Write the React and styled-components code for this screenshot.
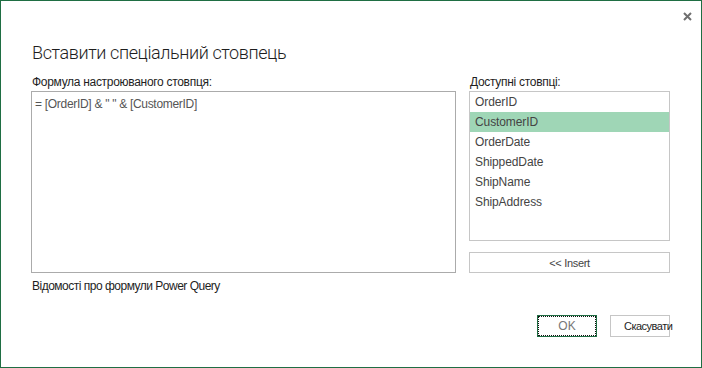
import React from "react";
import styled, { createGlobalStyle } from "styled-components";

const Global = createGlobalStyle`
  html, body {
    margin: 0;
    padding: 0;
    background: #ffffff;
  }
  body {
    font-family: "Liberation Sans", Arial, sans-serif;
  }
`;

const Dialog = styled.div`
  width: 702px;
  height: 368px;
  box-sizing: border-box;
  border: 1px solid #1f6e43;
  background: #ffffff;
  display: flex;
  flex-direction: column;
`;

const TopBar = styled.div`
  height: 30px;
  display: flex;
  justify-content: flex-end;
  align-items: flex-start;
  padding: 10px 9px 0 0;
  box-sizing: border-box;
`;

const CloseButton = styled.button`
  width: 10px;
  height: 10px;
  padding: 0;
  border: none;
  background: transparent;
  display: flex;
  align-items: center;
  justify-content: center;
  cursor: pointer;
`;

const Content = styled.div`
  padding: 0 31px 0 30px;
  display: flex;
  flex-direction: column;
`;

const Title = styled.h1`
  margin: 10px 0 0 1px;
  height: 24px;
  line-height: 24px;
  font-family: Roboto, "Liberation Sans", sans-serif;
  font-weight: 300;
  font-size: 18px;
  letter-spacing: -0.4px;
  color: #1e1e1e;
`;

const Body = styled.div`
  margin-top: 9px;
  display: grid;
  grid-template-columns: 425px 201px;
  column-gap: 13px;
`;

const Column = styled.div`
  display: flex;
  flex-direction: column;
`;

const Label = styled.div`
  height: 17px;
  line-height: 16px;
  font-size: 12px;
  letter-spacing: -0.3px;
  color: #1e1e1e;
  padding-left: 1px;
`;

const FormulaBox = styled.div`
  height: 182px;
  box-sizing: border-box;
  border: 1px solid #ababab;
  padding: 4px 3px;
  font-size: 12px;
  letter-spacing: -0.3px;
  line-height: 16px;
  color: #555555;
`;

const HelpLink = styled.a`
  margin-top: 5px;
  padding-left: 1px;
  line-height: 16px;
  font-size: 12px;
  letter-spacing: -0.5px;
  color: #1e1e1e;
  text-decoration: none;
  cursor: pointer;
`;

const ListBox = styled.ul`
  margin: 0;
  padding: 0;
  list-style: none;
  height: 150px;
  box-sizing: border-box;
  border: 1px solid #c6c6c6;
`;

const ListItem = styled.li`
  height: 20px;
  line-height: 21px;
  padding-left: 5px;
  font-size: 12px;
  letter-spacing: -0.1px;
  color: #444444;
  background: ${(p) => (p.$selected ? "#9fd6b6" : "transparent")};
`;

const InsertButton = styled.button`
  margin-top: 11px;
  height: 21px;
  border: 1px solid #c6c6c6;
  background: #ffffff;
  font-family: "Liberation Sans", Arial, sans-serif;
  font-size: 11px;
  letter-spacing: -0.3px;
  color: #444444;
  padding: 0;
`;

const Footer = styled.div`
  margin-top: 21px;
  display: flex;
  justify-content: flex-end;
  gap: 13px;
`;

const DialogButton = styled.button`
  width: 60px;
  height: 22px;
  box-sizing: border-box;
  background: #ffffff;
  border: 1px solid ${(p) => (p.$primary ? "#1f6e43" : "#c6c6c6")};
  outline: ${(p) => (p.$primary ? "1px dotted #111" : "none")};
  outline-offset: -2px;
  font-family: "Liberation Sans", Arial, sans-serif;
  font-size: ${(p) => (p.$primary ? "12px" : "11px")};
  letter-spacing: ${(p) => (p.$primary ? "0" : "-0.5px")};
  color: ${(p) => (p.$primary ? "#777777" : "#1e1e1e")};
  padding: 0 0 0 ${(p) => (p.$primary ? "0" : "13px")};
  text-align: ${(p) => (p.$primary ? "center" : "left")};
  white-space: nowrap;
  overflow: visible;
`;

const columns = ["OrderID", "CustomerID", "OrderDate", "ShippedDate", "ShipName", "ShipAddress"];

export default function App() {
  return (
    <>
      <Global />
      <Dialog>
        <TopBar>
          <CloseButton aria-label="Close">
            <svg width="9" height="9" viewBox="0 0 9 9">
              <path d="M1 1 L8 8 M8 1 L1 8" stroke="#6f6f6f" strokeWidth="2" />
            </svg>
          </CloseButton>
        </TopBar>
        <Content>
          <Title>Вставити спеціальний стовпець</Title>
          <Body>
            <Column>
              <Label>Формула настроюваного стовпця:</Label>
              <FormulaBox>= [OrderID] &amp; " " &amp; [CustomerID]</FormulaBox>
              <HelpLink>Відомості про формули Power Query</HelpLink>
            </Column>
            <Column>
              <Label>Доступні стовпці:</Label>
              <ListBox>
                {columns.map((c) => (
                  <ListItem key={c} $selected={c === "CustomerID"}>
                    {c}
                  </ListItem>
                ))}
              </ListBox>
              <InsertButton>&lt;&lt; Insert</InsertButton>
            </Column>
          </Body>
          <Footer>
            <DialogButton $primary>OK</DialogButton>
            <DialogButton>Скасувати</DialogButton>
          </Footer>
        </Content>
      </Dialog>
    </>
  );
}
